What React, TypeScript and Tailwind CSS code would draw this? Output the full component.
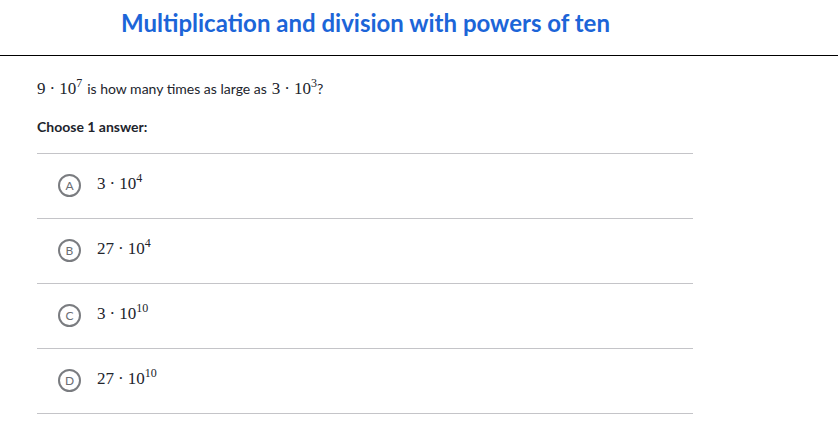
const options = [
  { letter: "A", base: "3", exp: "4" },
  { letter: "B", base: "27", exp: "4" },
  { letter: "C", base: "3", exp: "10" },
  { letter: "D", base: "27", exp: "10" },
];

function Pow({ base, exp }: { base: string; exp: string }) {
  return (
    <span className="font-['Liberation_Serif',serif] text-[17px] text-[#21242c] whitespace-nowrap">
      {base}
      <span className="mx-[4px]">·</span>
      10
      <sup className="text-[12px] relative -top-[7px] align-baseline">{exp}</sup>
    </span>
  );
}

function Bubble({ letter }: { letter: string }) {
  return (
    <div className="relative shrink-0 size-[23px] flex items-center justify-center">
      <svg width="23" height="23" viewBox="0 0 23 23" className="absolute inset-0">
        <circle cx="11.5" cy="11.5" r="10.5" fill="none" stroke="#7a7c80" strokeWidth="2" />
      </svg>
      <span className="relative text-[12px] leading-none text-[#6b6d72]">{letter}</span>
    </div>
  );
}

export default function App() {
  return (
    <div className="w-[838px] h-[435px] bg-white font-['Lato',sans-serif] text-[#21242c]">
      <div className="h-[56px] border-b border-black pl-[121px] pt-[7px]">
        <h1 className="text-[24px] font-bold text-[#1c65d8] leading-[32px]">
          Multiplication and division with powers of ten
        </h1>
      </div>
      <div className="pl-[37px] w-[693px]">
        <p className="mt-[20px] text-[14px] flex items-baseline gap-[5px]">
          <Pow base="9" exp="7" />
          <span>is how many times as large as</span>
          <span>
            <Pow base="3" exp="3" />?
          </span>
        </p>
        <p className="mt-[14px] text-[14px] font-bold">Choose 1 answer:</p>
        <div className="mt-[16px] border-t border-[#c4c4c8]">
          {options.map((o) => (
            <div
              key={o.letter}
              className="h-[65px] border-b border-[#c4c4c8] flex items-center pl-[21px]"
            >
              <Bubble letter={o.letter} />
              <div className="ml-[16px] -mt-[3px]">
                <Pow base={o.base} exp={o.exp} />
              </div>
            </div>
          ))}
        </div>
      </div>
    </div>
  );
}
